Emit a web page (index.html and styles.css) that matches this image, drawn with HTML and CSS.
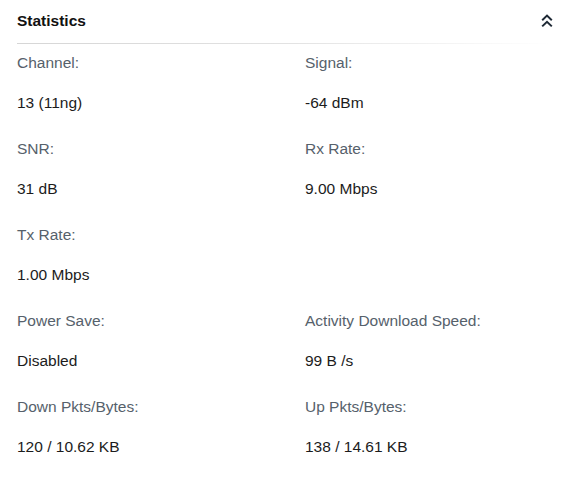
FILE: index.html
```html
<!DOCTYPE html>
<html>
<head>
<meta charset="utf-8">
<link rel="stylesheet" href="styles.css">
</head>
<body>
<div class="panel">
  <div class="header">
    <span class="title">Statistics</span>
    <svg class="chev" width="12" height="14" viewBox="0 0 12 14"><path d="M1.2 6.2 L6 1.6 L10.8 6.2 M1.2 12.4 L6 7.8 L10.8 12.4" fill="none" stroke="#1e2935" stroke-width="2"/></svg>
  </div>
  <div class="rule"></div>
  <div class="grid">
    <div class="item"><div class="label">Channel:</div><div class="value">13 (11ng)</div></div>
    <div class="item"><div class="label">Signal:</div><div class="value">-64 dBm</div></div>
    <div class="item"><div class="label">SNR:</div><div class="value">31 dB</div></div>
    <div class="item"><div class="label">Rx Rate:</div><div class="value">9.00 Mbps</div></div>
    <div class="item"><div class="label">Tx Rate:</div><div class="value">1.00 Mbps</div></div>
    <div class="item"></div>
    <div class="item"><div class="label">Power Save:</div><div class="value">Disabled</div></div>
    <div class="item"><div class="label">Activity Download Speed:</div><div class="value">99 B /s</div></div>
    <div class="item"><div class="label">Down Pkts/Bytes:</div><div class="value">120 / 10.62 KB</div></div>
    <div class="item"><div class="label">Up Pkts/Bytes:</div><div class="value">138 / 14.61 KB</div></div>
  </div>
</div>
</body>
</html>
```
FILE: styles.css
```css
html, body {
  margin: 0;
  padding: 0;
  background: #ffffff;
}
body {
  font-family: "Liberation Sans", Arial, sans-serif;
  font-size: 15.5px;
}
.panel {
  padding: 0 17px;
}
.header {
  display: flex;
  justify-content: space-between;
  align-items: center;
  padding: 11px 0 12px;
  height: 20px;
}
.title {
  font-weight: bold;
  color: #111111;
  line-height: 20px;
}
.chev {
  display: block;
  margin-right: -1px;
}
.rule {
  height: 1px;
  background: linear-gradient(to right, #d6d6d6 0%, #e2e2e2 50%, rgba(240,240,240,0) 100%);
}
.grid {
  display: grid;
  grid-template-columns: 288px 1fr;
  padding-top: 9px;
}
.item {
  height: 86px;
}
.label {
  color: #56616b;
  line-height: 20px;
  margin-bottom: 20px;
}
.value {
  color: #1c1c1c;
  line-height: 20px;
}
```
